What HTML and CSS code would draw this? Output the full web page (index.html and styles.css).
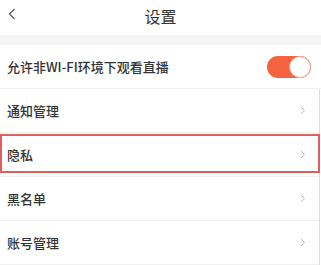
FILE: index.html
```html
<!DOCTYPE html>
<html lang="zh-CN">
<head>
    <meta charset="UTF-8">
    <title>设置</title>
    <link rel="stylesheet" href="styles.css">
</head>
<body>
<div id="page">
    <div class="header">
        <span class="back">
            <svg width="8" height="12" viewBox="0 0 8 12"><path d="M6.5 1 L1.5 6 L6.5 11" fill="none" stroke="#555" stroke-width="1.2"/></svg>
        </span>
        <span class="title">设置</span>
    </div>
    <div class="gap"></div>

    <div class="row">
        <span class="label">允许非WI-FI环境下观看直播</span>
        <span class="switch on"><span class="knob"></span></span>
    </div>

    <div class="group">
        <div class="row">
            <span class="label">通知管理</span>
            <span class="arrow"><svg width="6" height="9" viewBox="0 0 6 9"><path d="M1 1 L4.5 4.5 L1 8" fill="none" stroke="#bbb" stroke-width="1"/></svg></span>
        </div>
        <div class="row picked">
            <span class="label">隐私</span>
            <span class="arrow"><svg width="6" height="9" viewBox="0 0 6 9"><path d="M1 1 L4.5 4.5 L1 8" fill="none" stroke="#bbb" stroke-width="1"/></svg></span>
            <span class="mark"></span>
        </div>
        <div class="row">
            <span class="label">黑名单</span>
            <span class="arrow"><svg width="6" height="9" viewBox="0 0 6 9"><path d="M1 1 L4.5 4.5 L1 8" fill="none" stroke="#bbb" stroke-width="1"/></svg></span>
        </div>
        <div class="row">
            <span class="label">账号管理</span>
            <span class="arrow"><svg width="6" height="9" viewBox="0 0 6 9"><path d="M1 1 L4.5 4.5 L1 8" fill="none" stroke="#bbb" stroke-width="1"/></svg></span>
        </div>
    </div>
</div>
</body>
</html>
```

FILE: styles.css
```css
* {
    box-sizing: border-box;
}

body {
    margin: 0;
    background: #fff;
    font-family: "Noto Sans CJK SC", "Noto Sans", sans-serif;
    color: #333;
}

#page {
    width: 321px;
    overflow: hidden;
}

.header {
    height: 35px;
    display: flex;
    align-items: center;
    justify-content: center;
    position: relative;
}

.back {
    position: absolute;
    left: 8px;
    top: 8px;
    display: flex;
}

.title {
    font-size: 16px;
    color: #333;
    margin-top: -4px;
}

.gap {
    height: 10px;
    background: #f6f6f6;
}

.row {
    height: 44px;
    display: flex;
    align-items: center;
    justify-content: space-between;
    padding: 0 14px 0 7px;
    border-bottom: 1px solid #f0f0f0;
    position: relative;
}

.label {
    font-size: 13px;
    font-weight: 500;
    color: #333;
}

.switch {
    width: 44px;
    height: 22px;
    border-radius: 11px;
    background: #f4623f;
    display: flex;
    justify-content: flex-end;
    margin-right: -4px;
}

.knob {
    width: 22px;
    height: 22px;
    border-radius: 50%;
    background: #fff;
    border: 1px solid #f0a898;
}

.group {
    width: 320px;
    border-right: 1px solid #ddd;
}

.group .row {
    padding-right: 13px;
}

.arrow {
    display: flex;
}

.mark {
    position: absolute;
    left: 0;
    right: -1px;
    top: 1px;
    bottom: 3px;
    border: 2px solid #e25d5d;
}
```
